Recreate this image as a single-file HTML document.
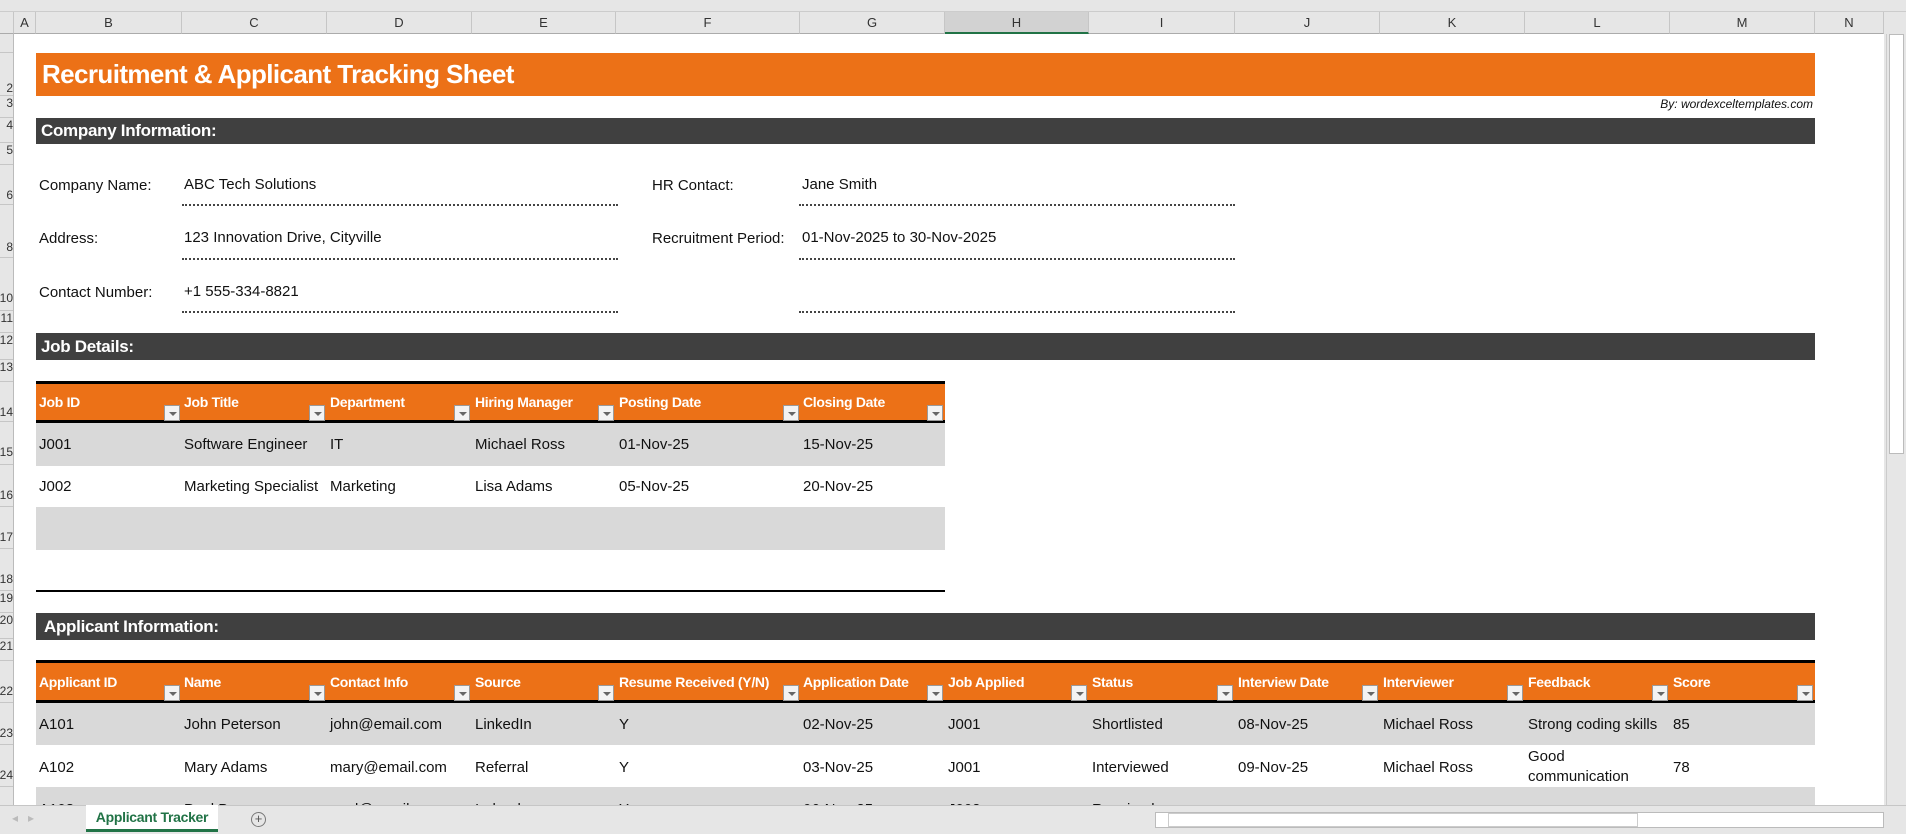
<!DOCTYPE html>
<html><head><meta charset="utf-8"><style>
*{margin:0;padding:0;box-sizing:border-box}
body{width:1906px;height:834px;overflow:hidden;background:#e6e6e6;font-family:"Liberation Sans",Arial,sans-serif;position:relative}
.a{position:absolute}
.ch{position:absolute;top:12px;height:22px;font-size:13px;color:#333;text-align:center;line-height:22px;border-right:1px solid #c6c6c6;border-bottom:1px solid #ababab}
#sheet{position:absolute;left:14px;top:34px;width:1870px;height:771px;background:#fff;overflow:hidden}
.t{position:absolute;font-size:15px;color:#111;white-space:nowrap}
.bar{position:absolute;left:22px;width:1779px;background:#404040;color:#fff;font-weight:bold;font-size:17px;padding-left:5px;letter-spacing:-0.3px}
.dot{position:absolute;height:0;border-top:2px dotted #444}
.hd{position:absolute;color:#fff;font-weight:bold;font-size:14px;white-space:nowrap;letter-spacing:-0.3px}
.fb{position:absolute;width:16px;height:16px;background:#f3f3f3;border:1px solid #9a9a9a}
.fb:after{content:"";position:absolute;left:4px;top:6px;border-left:4px solid transparent;border-right:4px solid transparent;border-top:4px solid #666}
.rn{position:absolute;left:0;width:13px;border-bottom:1px solid #c6c6c6;font-size:12px;color:#333;text-align:right;overflow:hidden;white-space:nowrap;direction:rtl}
</style></head><body>
<div class="a" style="left:0;top:0;width:1906px;height:12px;background:#e6e6e6;border-bottom:1px solid #ccc"></div>
<div class="ch" style="left:0;width:14px"></div>
<div class="ch" style="left:14px;width:22px">A</div>
<div class="ch" style="left:36px;width:146px">B</div>
<div class="ch" style="left:182px;width:145px">C</div>
<div class="ch" style="left:327px;width:145px">D</div>
<div class="ch" style="left:472px;width:144px">E</div>
<div class="ch" style="left:616px;width:184px">F</div>
<div class="ch" style="left:800px;width:145px">G</div>
<div class="ch" style="left:945px;width:144px;background:#d2d2d2;border-bottom:2px solid #217346">H</div>
<div class="ch" style="left:1089px;width:146px">I</div>
<div class="ch" style="left:1235px;width:145px">J</div>
<div class="ch" style="left:1380px;width:145px">K</div>
<div class="ch" style="left:1525px;width:145px">L</div>
<div class="ch" style="left:1670px;width:145px">M</div>
<div class="ch" style="left:1815px;width:69px">N</div>
<div class="a" style="left:1886px;top:34px;width:20px;height:771px;background:#e6e6e6;border-left:1px solid #ccc"></div>
<div class="a" style="left:1889px;top:34px;width:15px;height:420px;background:#fff;border:1px solid #bbb"></div>
<div class="a" style="left:0;top:34px;width:14px;height:771px;background:#e6e6e6;border-right:1px solid #bbb"></div>
<div class="rn" style="top:34px;height:19px"></div>
<div class="rn" style="top:53px;height:43px;line-height:70px">2</div>
<div class="rn" style="top:96px;height:22px">3</div>
<div class="rn" style="top:118px;height:25px">4</div>
<div class="rn" style="top:143px;height:22px">5</div>
<div class="rn" style="top:165px;height:40px;line-height:60px">6</div>
<div class="rn" style="top:205px;height:53px;line-height:85px">8</div>
<div class="rn" style="top:258px;height:53px;line-height:80px">10</div>
<div class="rn" style="top:311px;height:22px">11</div>
<div class="rn" style="top:333px;height:27px">12</div>
<div class="rn" style="top:360px;height:22px">13</div>
<div class="rn" style="top:382px;height:40px;line-height:60px">14</div>
<div class="rn" style="top:422px;height:43px;line-height:60px">15</div>
<div class="rn" style="top:465px;height:42px;line-height:60px">16</div>
<div class="rn" style="top:507px;height:42px;line-height:60px">17</div>
<div class="rn" style="top:549px;height:42px;line-height:60px">18</div>
<div class="rn" style="top:591px;height:22px">19</div>
<div class="rn" style="top:613px;height:26px">20</div>
<div class="rn" style="top:639px;height:22px">21</div>
<div class="rn" style="top:661px;height:42px;line-height:60px">22</div>
<div class="rn" style="top:703px;height:42px;line-height:60px">23</div>
<div class="rn" style="top:745px;height:42px;line-height:60px">24</div>

<div id="sheet">
<div class="a" style="left:22px;top:19px;width:1779px;height:43px;background:#ec7117;color:#fff;font-weight:bold;font-size:26px;line-height:43px;padding-left:6px;letter-spacing:-0.6px">Recruitment &amp; Applicant Tracking Sheet</div>
<div class="t" style="right:71px;top:63px;font-size:12px;font-style:italic">By: wordexceltemplates.com</div>
<div class="bar" style="top:84px;height:26px;line-height:26px">Company Information:</div>

<div class="t" style="left:25px;top:143px">Company Name:</div>
<div class="t" style="left:170px;top:142px">ABC Tech Solutions</div>
<div class="dot" style="left:168px;top:170px;width:436px"></div>
<div class="t" style="left:25px;top:196px">Address:</div>
<div class="t" style="left:170px;top:195px">123 Innovation Drive, Cityville</div>
<div class="dot" style="left:168px;top:224px;width:436px"></div>
<div class="t" style="left:25px;top:250px">Contact Number:</div>
<div class="t" style="left:170px;top:249px">+1 555-334-8821</div>
<div class="dot" style="left:168px;top:277px;width:436px"></div>
<div class="t" style="left:638px;top:143px">HR Contact:</div>
<div class="t" style="left:788px;top:142px">Jane Smith</div>
<div class="dot" style="left:785px;top:170px;width:436px"></div>
<div class="t" style="left:638px;top:196px">Recruitment Period:</div>
<div class="t" style="left:788px;top:195px">01-Nov-2025 to 30-Nov-2025</div>
<div class="dot" style="left:785px;top:224px;width:436px"></div>
<div class="dot" style="left:785px;top:277px;width:436px"></div>

<div class="bar" style="top:299px;height:27px;line-height:27px">Job Details:</div>

<div class="a" style="left:22px;top:347px;width:909px;height:42px;background:#ec7117;border-top:3px solid #000;border-bottom:3px solid #000"></div>
<div class="a" style="left:22px;top:389px;width:909px;height:43px;background:#d9d9d9"></div>
<div class="a" style="left:22px;top:473px;width:909px;height:43px;background:#d9d9d9"></div>
<div class="a" style="left:22px;top:556px;width:909px;height:2px;background:#000"></div>
<div class="hd" style="left:25px;top:360px">Job ID</div><div class="fb" style="left:150px;top:371px"></div>
<div class="hd" style="left:170px;top:360px">Job Title</div><div class="fb" style="left:295px;top:371px"></div>
<div class="hd" style="left:316px;top:360px">Department</div><div class="fb" style="left:440px;top:371px"></div>
<div class="hd" style="left:461px;top:360px">Hiring Manager</div><div class="fb" style="left:584px;top:371px"></div>
<div class="hd" style="left:605px;top:360px">Posting Date</div><div class="fb" style="left:769px;top:371px"></div>
<div class="hd" style="left:789px;top:360px">Closing Date</div><div class="fb" style="left:913px;top:371px"></div>
<div class="t" style="left:25px;top:402px">J001</div><div class="t" style="left:170px;top:402px">Software Engineer</div><div class="t" style="left:316px;top:402px">IT</div><div class="t" style="left:461px;top:402px">Michael Ross</div><div class="t" style="left:605px;top:402px">01-Nov-25</div><div class="t" style="left:789px;top:402px">15-Nov-25</div>
<div class="t" style="left:25px;top:444px">J002</div><div class="t" style="left:170px;top:444px">Marketing Specialist</div><div class="t" style="left:316px;top:444px">Marketing</div><div class="t" style="left:461px;top:444px">Lisa Adams</div><div class="t" style="left:605px;top:444px">05-Nov-25</div><div class="t" style="left:789px;top:444px">20-Nov-25</div>

<div class="bar" style="top:579px;height:27px;line-height:27px;padding-left:8px">Applicant Information:</div>

<div class="a" style="left:22px;top:626px;width:1779px;height:43px;background:#ec7117;border-top:3px solid #000;border-bottom:3px solid #000"></div>
<div class="a" style="left:22px;top:669px;width:1779px;height:42px;background:#d9d9d9"></div>
<div class="a" style="left:22px;top:753px;width:1779px;height:42px;background:#d9d9d9"></div>
<div class="hd" style="left:25px;top:640px">Applicant ID</div><div class="fb" style="left:150px;top:651px"></div>
<div class="hd" style="left:170px;top:640px">Name</div><div class="fb" style="left:295px;top:651px"></div>
<div class="hd" style="left:316px;top:640px">Contact Info</div><div class="fb" style="left:440px;top:651px"></div>
<div class="hd" style="left:461px;top:640px">Source</div><div class="fb" style="left:584px;top:651px"></div>
<div class="hd" style="left:605px;top:640px">Resume Received (Y/N)</div><div class="fb" style="left:769px;top:651px"></div>
<div class="hd" style="left:789px;top:640px">Application Date</div><div class="fb" style="left:913px;top:651px"></div>
<div class="hd" style="left:934px;top:640px">Job Applied</div><div class="fb" style="left:1057px;top:651px"></div>
<div class="hd" style="left:1078px;top:640px">Status</div><div class="fb" style="left:1203px;top:651px"></div>
<div class="hd" style="left:1224px;top:640px">Interview Date</div><div class="fb" style="left:1348px;top:651px"></div>
<div class="hd" style="left:1369px;top:640px">Interviewer</div><div class="fb" style="left:1493px;top:651px"></div>
<div class="hd" style="left:1514px;top:640px">Feedback</div><div class="fb" style="left:1638px;top:651px"></div>
<div class="hd" style="left:1659px;top:640px">Score</div><div class="fb" style="left:1783px;top:651px"></div>

<div class="t" style="left:25px;top:682px">A101</div><div class="t" style="left:170px;top:682px">John Peterson</div><div class="t" style="left:316px;top:682px">john@email.com</div><div class="t" style="left:461px;top:682px">LinkedIn</div><div class="t" style="left:605px;top:682px">Y</div><div class="t" style="left:789px;top:682px">02-Nov-25</div><div class="t" style="left:934px;top:682px">J001</div><div class="t" style="left:1078px;top:682px">Shortlisted</div><div class="t" style="left:1224px;top:682px">08-Nov-25</div><div class="t" style="left:1369px;top:682px">Michael Ross</div><div class="t" style="left:1514px;top:682px">Strong coding skills</div><div class="t" style="left:1659px;top:682px">85</div>
<div class="t" style="left:25px;top:725px">A102</div><div class="t" style="left:170px;top:725px">Mary Adams</div><div class="t" style="left:316px;top:725px">mary@email.com</div><div class="t" style="left:461px;top:725px">Referral</div><div class="t" style="left:605px;top:725px">Y</div><div class="t" style="left:789px;top:725px">03-Nov-25</div><div class="t" style="left:934px;top:725px">J001</div><div class="t" style="left:1078px;top:725px">Interviewed</div><div class="t" style="left:1224px;top:725px">09-Nov-25</div><div class="t" style="left:1369px;top:725px">Michael Ross</div><div class="t" style="left:1514px;top:714px">Good</div><div class="t" style="left:1514px;top:734px">communication</div><div class="t" style="left:1659px;top:725px">78</div>
<div class="t" style="left:25px;top:767px">A103</div><div class="t" style="left:170px;top:767px">Paul Brown</div><div class="t" style="left:316px;top:767px">paul@email.com</div><div class="t" style="left:461px;top:767px">Indeed</div><div class="t" style="left:605px;top:767px">Y</div><div class="t" style="left:789px;top:767px">06-Nov-25</div><div class="t" style="left:934px;top:767px">J002</div><div class="t" style="left:1078px;top:767px">Received</div>
</div>

<div class="a" style="left:0;top:805px;width:1906px;height:29px;background:#e6e6e6;border-top:1px solid #c6c6c6"></div>
<div class="a" style="left:12px;top:811px;font-size:12px;color:#bbb">◂ &nbsp; ▸</div>
<div class="a" style="left:86px;top:805px;width:132px;height:27px;background:#fff;border-bottom:3px solid #217346;color:#217346;font-weight:bold;font-size:14px;text-align:center;line-height:25px;letter-spacing:-0.3px">Applicant Tracker</div>
<div class="a" style="left:251px;top:812px;width:15px;height:15px;border:1px solid #777;border-radius:50%;color:#555;font-size:13px;line-height:12px;text-align:center">+</div>
<div class="a" style="left:1155px;top:812px;width:729px;height:16px;background:#fff;border:1px solid #bbb"></div>
<div class="a" style="left:1168px;top:813px;width:470px;height:14px;background:#fff;border:1px solid #ccc"></div>
</body></html>
